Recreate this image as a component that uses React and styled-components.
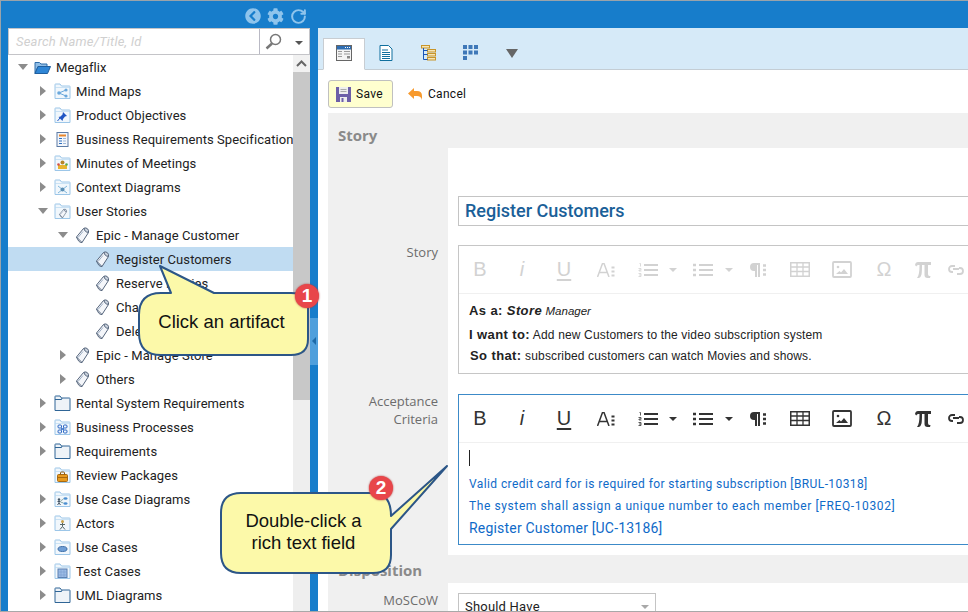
import React from "react"
import styled, { createGlobalStyle } from "styled-components"
import { FaChevronCircleLeft, FaCog } from "react-icons/fa"
import { RotateCw } from "lucide-react"

const GlobalStyle = createGlobalStyle`
  html, body { margin: 0; padding: 0; background: #fff; }
  * { box-sizing: border-box; }
`

const treeRows = [
  { label: "Megaflix", level: 0, arrow: "open", icon: "root" },
  { label: "Mind Maps", level: 1, arrow: "closed", icon: "mind" },
  { label: "Product Objectives", level: 1, arrow: "closed", icon: "pin" },
  { label: "Business Requirements Specification", level: 1, arrow: "closed", icon: "doc" },
  { label: "Minutes of Meetings", level: 1, arrow: "closed", icon: "meeting" },
  { label: "Context Diagrams", level: 1, arrow: "closed", icon: "context" },
  { label: "User Stories", level: 1, arrow: "open", icon: "story" },
  { label: "Epic - Manage Customer", level: 2, arrow: "open", icon: "artifact" },
  { label: "Register Customers", level: 3, icon: "artifact", selected: true },
  { label: "Reserve Movies", level: 3, icon: "artifact" },
  { label: "Change Customer", level: 3, icon: "artifact" },
  { label: "Delete Customer", level: 3, icon: "artifact" },
  { label: "Epic - Manage Store", level: 2, arrow: "closed", icon: "artifact" },
  { label: "Others", level: 2, arrow: "closed", icon: "artifact" },
  { label: "Rental System Requirements", level: 1, arrow: "closed", icon: "plain" },
  { label: "Business Processes", level: 1, arrow: "closed", icon: "process" },
  { label: "Requirements", level: 1, arrow: "closed", icon: "plain" },
  { label: "Review Packages", level: 1, icon: "review" },
  { label: "Use Case Diagrams", level: 1, arrow: "closed", icon: "ucd" },
  { label: "Actors", level: 1, arrow: "closed", icon: "actor" },
  { label: "Use Cases", level: 1, arrow: "closed", icon: "usecase" },
  { label: "Test Cases", level: 1, arrow: "closed", icon: "test" },
  { label: "UML Diagrams", level: 1, arrow: "closed", icon: "plain" },
]

const FolderIcon = ({ dark, children }) => (
  <svg width="17" height="17" viewBox="0 0 17 17">
    <path
      d="M1 15.500V1.500q0-.5 .5-.5h4.500l1.500 2h8q.5 0 .5 .5v12z"
      fill={dark ? "#eef3f8" : "#f1f7fc"}
      stroke={dark ? "#2f6596" : "#9cc6e8"}
      strokeWidth="1"
    />
    <path d="M1 4.500h15" stroke={dark ? "#2f6596" : "#b9d8f0"} fill="none" strokeWidth={dark ? 1 : .7} opacity={dark ? 0 : 1} />
    {dark && <path d="M1 4.500h6.500L8 3" stroke="#2f6596" fill="none" />}
    {children}
  </svg>
)

const ArtifactIcon = ({ small }) => (
  <svg width={small ? 9 : 15} height={small ? 10 : 17} viewBox="0 0 15 17">
    <path d="M1.500 10 8.500 1.500l5 4L7 15.500z" fill="#f4f6fa" stroke="#55657c" strokeLinejoin="round" />
    <path d="M9 1.200q2-.8 3.500 .6t1 3.500q-2 .2-3.200-1.100T9 1.200z" fill="#c9d1dc" stroke="#55657c" />
    <path d="M3 10.500 8 4.500" stroke="#9fb0c6" />
    <path d="M7 15.500q-3 .8-5.500-5.500" fill="none" stroke="#55657c" />
  </svg>
)

const TreeIcon = ({ kind }) => {
  switch (kind) {
    case "root":
      return (
        <svg width="17" height="15" viewBox="0 0 17 15">
          <path d="M1 13.500V2.500h4.500l1.500 1.500h6v2.500H4z" fill="#8fbde6" stroke="#2e6ca8" />
          <path d="M1 13.500 4 6.500h12.500l-3 7z" fill="#2f86d6" stroke="#1f5f9f" />
        </svg>
      )
    case "mind":
      return (
        <FolderIcon>
          <circle cx="5" cy="10" r="1.800" fill="#6aa8dc" />
          <circle cx="12" cy="7" r="1.600" fill="#6aa8dc" />
          <circle cx="12" cy="13" r="1.600" fill="#6aa8dc" />
          <path d="M5 10 12 7M5 10l7 3" stroke="#6aa8dc" />
        </FolderIcon>
      )
    case "pin":
      return (
        <FolderIcon>
          <path d="M9 5l4 4-2 .5-2 2.500-.5 2-4-4 2-.5 2-2z" fill="#1f55c4" />
          <path d="M6 11l-2.500 3" stroke="#1f55c4" />
        </FolderIcon>
      )
    case "doc":
      return (
        <svg width="17" height="17" viewBox="0 0 17 17">
          <rect x="3" y="1.500" width="11" height="14" fill="#f3f6fb" stroke="#5c7ba5" />
          <rect x="5" y="3.500" width="7" height="2" fill="#e8862c" />
          <path d="M5 7.500h3M5 10h3M5 12.500h3" stroke="#2c6fc0" />
          <path d="M9 7.500h3M9 10h3M9 12.500h3" stroke="#9db7d8" />
        </svg>
      )
    case "meeting":
      return (
        <FolderIcon>
          <rect x="4" y="10" width="9" height="4" fill="#e8b52f" />
          <circle cx="8.500" cy="7.500" r="2" fill="#b5862a" />
          <circle cx="4.500" cy="9.500" r="1.300" fill="#d2524a" />
          <circle cx="12.500" cy="9.500" r="1.300" fill="#5aa84f" />
        </FolderIcon>
      )
    case "context":
      return (
        <FolderIcon>
          <path d="M4 7l9 7M13 7l-9 7" stroke="#7fb7dc" />
          <circle cx="8.500" cy="10.500" r="2" fill="#5b8fb5" />
        </FolderIcon>
      )
    case "story":
      return (
        <FolderIcon>
          <g transform="translate(4.500 5.500)"><ArtifactIcon small /></g>
        </FolderIcon>
      )
    case "artifact":
      return <ArtifactIcon />
    case "plain":
      return <FolderIcon dark />
    case "process":
      return (
        <FolderIcon>
          <rect x="4" y="6" width="3.500" height="3" rx="1" fill="none" stroke="#2a66c4" />
          <rect x="9.500" y="6" width="3.500" height="3" rx="1" fill="none" stroke="#2a66c4" />
          <rect x="4" y="11" width="3.500" height="3" rx="1" fill="none" stroke="#2a66c4" />
          <rect x="9.500" y="11" width="3.500" height="3" rx="1" fill="none" stroke="#2a66c4" />
          <path d="M7 9l3 2M10 9l-3 2" stroke="#2a66c4" />
        </FolderIcon>
      )
    case "review":
      return (
        <FolderIcon>
          <rect x="3.500" y="7.500" width="10" height="7" rx="1" fill="#e79a1e" stroke="#a8690f" />
          <path d="M6.500 7.500V6q0-1 1-1h2q1 0 1 1v1.500" fill="none" stroke="#8a5a12" />
          <path d="M3.500 10.500h10" stroke="#a8690f" />
        </FolderIcon>
      )
    case "ucd":
      return (
        <FolderIcon>
          <circle cx="5" cy="8.500" r="1.200" fill="#456" />
          <path d="M5 9.500v2.500l-1.500 2M5 12l1.500 2M3.500 10.500h3" stroke="#456" fill="none" />
          <ellipse cx="11.500" cy="7.500" rx="2" ry="1.200" fill="#4a8ed0" />
          <ellipse cx="11.500" cy="12.500" rx="2" ry="1.200" fill="#4a8ed0" />
          <path d="M6.500 10 9.500 8M6.500 11l3 1" stroke="#8aa" />
        </FolderIcon>
      )
    case "actor":
      return (
        <FolderIcon>
          <circle cx="8.500" cy="6.500" r="1.500" fill="#c9a14a" />
          <path d="M8.500 8v3.500L6 14.500M8.500 11.500l2.500 3M6 9.500h5" stroke="#566" fill="none" />
        </FolderIcon>
      )
    case "usecase":
      return (
        <FolderIcon>
          <ellipse cx="8.500" cy="10" rx="4.500" ry="2.500" fill="#6f9fd6" stroke="#3f6fa8" />
        </FolderIcon>
      )
    case "test":
      return (
        <FolderIcon>
          <rect x="4" y="6" width="9" height="8.500" fill="#9dbde6" stroke="#5a7fb0" />
          <path d="M7 6v8.500M10 6v8.500M4 9h9M4 12h9" stroke="#7b9ed0" strokeWidth=".6" />
        </FolderIcon>
      )
    default:
      return null
  }
}

const TabIcon = ({ kind }) => {
  if (kind === "form") {
    return (
      <svg width="16" height="16" viewBox="0 0 16 16">
        <rect x=".5" y=".5" width="15" height="15" fill="#f4f4f4" stroke="#666" />
        <rect x="1" y="1" width="14" height="3.500" fill="#2f6eb3" />
        <path d="M9 2.500h1M11 2.500h1M13 2.500h1" stroke="#fff" />
        <path d="M2 6.500h4M2 9h4M2 11.500h4M8 6.500h6M8 9h6" stroke="#9a9a9a" />
        <rect x="11" y="11" width="3" height="2.500" fill="#888" />
      </svg>
    )
  }
  if (kind === "page") {
    return (
      <svg width="14" height="16" viewBox="0 0 14 16">
        <path d="M1 .5h8.500L13 4v11.500H1z" fill="#fff" stroke="#0f6f9e" />
        <path d="M3 5h6M3 7.500h8M3 9.500h8M3 11.500h8M3 13.500h8" stroke="#0f6f9e" />
      </svg>
    )
  }
  if (kind === "tree") {
    return (
      <svg width="15" height="16" viewBox="0 0 15 16">
        <rect x=".5" y=".5" width="8" height="2.500" fill="#f7e6b5" stroke="#c8952a" />
        <rect x="6.500" y="4.500" width="8" height="2.500" fill="#f7e6b5" stroke="#c8952a" />
        <rect x="6.500" y="8.500" width="8" height="2.500" fill="#f7e6b5" stroke="#c8952a" />
        <rect x="6.500" y="12.500" width="8" height="2.500" fill="#f7e6b5" stroke="#c8952a" />
        <path d="M2.500 3v11.500h4M2.500 5.500h4M2.500 9.500h4" stroke="#1a56b8" fill="none" />
      </svg>
    )
  }
  return (
    <svg width="15" height="16" viewBox="0 0 15 16">
      <g fill="#3f78b8">
        <rect width="4" height="4" />
        <rect x="5.500" width="4" height="4" />
        <rect x="11" width="4" height="4" />
        <rect y="5.500" width="4" height="4" />
        <rect x="5.500" y="5.500" width="4" height="4" />
        <rect x="11" y="5.500" width="4" height="4" />
        <rect y="11" width="4" height="4" />
      </g>
    </svg>
  )
}

const OrderedIcon = () => (
  <svg width="20" height="14" viewBox="0 0 20 14" stroke="currentColor" fill="none">
    <path d="M6 2h14M6 7h14M6 12h14" strokeWidth="1.800" />
    <path d="M1.500 .5h1v3M.5 5.500h2.500v1.500h-2v1h2.500M.5 10.500h2.500v3h-2.500M1 12h2" strokeWidth=".8" />
  </svg>
)

const BulletIcon = () => (
  <svg width="20" height="14" viewBox="0 0 20 14" stroke="currentColor" fill="none">
    <path d="M6 2h14M6 7h14M6 12h14" strokeWidth="1.800" />
    <path d="M0 2h3M0 7h3M0 12h3" strokeWidth="2.400" strokeDasharray="2.500 0" />
  </svg>
)

const ParagraphIcon = () => (
  <svg width="19" height="16" viewBox="0 0 19 16">
    <path d="M11 1H6a4 4 0 0 0 0 8h1v6h2V3h1v12h2V1z" fill="currentColor" />
    <path d="M15 3.500h3M15 8h3M15 12.500h3" stroke="currentColor" strokeWidth="2.400" />
  </svg>
)

const FontSizeIcon = () => (
  <svg width="18" height="14" viewBox="0 0 18 14">
    <path d="M0.500 14 5.500 .5h1.500L12 14M2.500 9.500h7.500" fill="none" stroke="currentColor" strokeWidth="1.500" />
    <path d="M14.500 4.500h3M14.500 8.500h3M14.500 12.500h3" stroke="currentColor" strokeWidth="2.200" />
  </svg>
)

const TableIcon = () => (
  <svg width="20" height="15" viewBox="0 0 20 15" fill="none" stroke="currentColor">
    <rect x=".75" y=".75" width="18.500" height="13.500" strokeWidth="1.500" />
    <path d="M1 5h18M1 9.500h18M7 1v13M13 1v13" strokeWidth="1.300" />
  </svg>
)

const PictureIcon = () => (
  <svg width="20" height="17" viewBox="0 0 20 17">
    <rect x="1" y="1" width="18" height="15" rx="1" fill="none" stroke="currentColor" strokeWidth="1.800" />
    <circle cx="6" cy="6" r="1.300" fill="currentColor" />
    <path d="M4 13l3.500-3 1.500 1.500 3-3.500 4 5z" fill="currentColor" />
  </svg>
)

const PiIcon = () => (
  <svg width="17" height="18" viewBox="0 0 17 18">
    <path d="M1 4q.5-3 3-3h13v3h-3v9q0 2 1.500 2h1l-.5 2h-2.500q-3 0-3-3V4H8q0 7-.5 9.500T5 17H3q1.500-2 2-5t.5-8H4q-1 0-1.800 1.500z" fill="currentColor" />
  </svg>
)

const ChainIcon = () => (
  <svg width="16" height="10" viewBox="0 0 16 10" fill="none" stroke="currentColor" strokeWidth="1.800">
    <path d="M7 1H4a3 3 0 0 0 0 6h1M9 9h3a3 3 0 0 0 0-6h-1M5 4h6" />
  </svg>
)

const EditorToolbar = ({ muted }) => (
  <ToolRow $muted={muted}>
    <ToolGlyph>B</ToolGlyph>
    <ToolGlyph $italic>i</ToolGlyph>
    <ToolGlyph $underline>U</ToolGlyph>
    <ToolButton><FontSizeIcon /></ToolButton>
    <ToolButton><OrderedIcon /></ToolButton>
    <Caret $gap={4} />
    <ToolButton $width={44}><BulletIcon /></ToolButton>
    <Caret $gap={2} />
    <ToolButton $width={44}><ParagraphIcon /></ToolButton>
    <ToolButton><TableIcon /></ToolButton>
    <ToolButton><PictureIcon /></ToolButton>
    <ToolGlyph $size={20}>Ω</ToolGlyph>
    <ToolButton $width={34}><PiIcon /></ToolButton>
    <ToolButton $width={34}><ChainIcon /></ToolButton>
  </ToolRow>
)

const SpeechBubble = ({ x, y, width, height, body, number, badgeX, badgeY, path, lines }) => (
  <BubbleLayer $x={x} $y={y} $w={width} $h={height}>
    <svg width={width} height={height} viewBox={`0 0 ${width} ${height}`}>
      <path d={path} fill="#fcf9a9" stroke="#2c5687" strokeWidth="2" strokeLinejoin="round" />
    </svg>
    <BubbleText $left={body.left} $top={body.top} $w={body.width} $h={body.height}>
      {lines.map(line => <span key={line}>{line}</span>)}
    </BubbleText>
    <Badge $x={badgeX} $y={badgeY}>{number}</Badge>
  </BubbleLayer>
)

const App = () => (
  <>
    <GlobalStyle />
    <Page>
      <Sidebar>
        <SideHeader>
          <FaChevronCircleLeft size={16} />
          <FaCog size={17} />
          <RotateCw size={17} strokeWidth={2.800} />
        </SideHeader>
        <SearchBox>
          <SearchInput>Search Name/Title, Id</SearchInput>
          <SearchButton>
            <svg width="17" height="17" viewBox="0 0 17 17" fill="none" stroke="#777">
              <circle cx="10.500" cy="6.500" r="5" strokeWidth="1.500" />
              <path d="M7 10.500 1.500 15.500" strokeWidth="2.500" />
            </svg>
            <SmallCaret />
          </SearchButton>
        </SearchBox>
        <TreeArea>
          <Tree>
            {treeRows.map(row => (
              <TreeRow key={row.label} $level={row.level} $selected={row.selected}>
                <ArrowSlot><Arrow $kind={row.arrow} /></ArrowSlot>
                <IconSlot><TreeIcon kind={row.icon} /></IconSlot>
                <RowLabel>{row.label}</RowLabel>
              </TreeRow>
            ))}
          </Tree>
          <ScrollBar>
            <ScrollUp>
              <svg width="11" height="7" viewBox="0 0 11 7" fill="none" stroke="#666" strokeWidth="2"><path d="M1 6l4.500-4.500L10 6" /></svg>
            </ScrollUp>
            <ScrollThumb />
          </ScrollBar>
        </TreeArea>
      </Sidebar>

      <Splitter>
        <SplitHandle />
      </Splitter>

      <Main>
        <TabBar>
          <Tab $active><TabIcon kind="form" /></Tab>
          <Tab><TabIcon kind="page" /></Tab>
          <Tab><TabIcon kind="tree" /></Tab>
          <Tab><TabIcon kind="grid" /></Tab>
          <Tab><TabArrow /></Tab>
        </TabBar>
        <ActionBar>
          <SaveButton>
            <svg width="15" height="15" viewBox="0 0 15 15">
              <rect width="15" height="15" fill="#6d5fa8" />
              <rect x="3" y="0" width="9" height="7" fill="#eee" />
              <path d="M4.500 2.500h6M4.500 4.500h6" stroke="#aaa" />
              <rect x="4" y="10" width="7" height="5" fill="#eee" />
              <rect x="5.500" y="11" width="2" height="4" fill="#6d5fa8" />
            </svg>
            Save
          </SaveButton>
          <CancelButton>
            <svg width="14" height="12" viewBox="0 0 14 12">
              <path d="M6 0v3h3q5 0 5 5v4q-1-4-5-4H6v3L0 5.500z" fill="#f79a2e" />
            </svg>
            Cancel
          </CancelButton>
        </ActionBar>
        <Content>
          <SectionTitle $height={35}>Story</SectionTitle>
          <FieldRow>
            <span />
            <FieldValue $top={48} $bottom={19}>
              <TitleInput>Register Customers</TitleInput>
            </FieldValue>
          </FieldRow>
          <FieldRow>
            <FieldLabel>Story</FieldLabel>
            <FieldValue $bottom={20}>
              <Editor>
                <EditorToolbar muted />
                <StoryBody>
                  <StoryLine $height={24}><b>As a: <i>Store</i></b> <Small>Manager</Small></StoryLine>
                  <StoryLine $height={24}><b>I want to:</b> Add new Customers to the video subscription system</StoryLine>
                  <StoryLine $height={18} $nudge><b>So that:</b> subscribed customers can watch Movies and shows.</StoryLine>
                </StoryBody>
              </Editor>
            </FieldValue>
          </FieldRow>
          <FieldRow>
            <FieldLabel>Acceptance<br />Criteria</FieldLabel>
            <FieldValue $bottom={10}>
              <Editor $active>
                <EditorToolbar />
                <LinkBody>
                  <TextCaret />
                  <RefLink $spacing={0.4}>Valid credit card for is required for starting subscription [BRUL-10318]</RefLink>
                  <RefLink $spacing={0.6}>The system shall assign a unique number to each member [FREQ-10302]</RefLink>
                  <RefLink $spacing={0.2} $large>Register Customer [UC-13186]</RefLink>
                </LinkBody>
              </Editor>
            </FieldValue>
          </FieldRow>
          <SectionTitle $height={28}>Disposition</SectionTitle>
          <FieldRow>
            <FieldLabel $top={8}>MoSCoW</FieldLabel>
            <FieldValue $top={10} $bottom={20}>
              <SelectBox>Should Have<SmallCaret $light /></SelectBox>
            </FieldValue>
          </FieldRow>
        </Content>
      </Main>

      <SpeechBubble
        x={130} y={258} width={190} height={110}
        path="M29 7 83 34H160Q177 34 177 47V80Q177 96 160 96H30Q8 96 8 74V56Q8 34 30 34H40Z"
        body={{ left: 8, top: 33, width: 165, height: 60 }}
        badgeX={176} badgeY={37}
        number="1"
        lines={["Click an artifact"]}
      />
      <SpeechBubble
        x={212} y={456} width={244} height={124}
        path="M234 9 178 59Q178 36 160 36H28Q8 36 8 56V96Q8 116 28 116H160Q178 116 178 98V72Z"
        body={{ left: 8, top: 35, width: 165, height: 80 }}
        badgeX={168} badgeY={31}
        number="2"
        lines={["Double-click a", "rich text field"]}
      />
    </Page>
  </>
)

const Page = styled.div`
  position: relative;
  display: flex;
  width: 968px;
  height: 612px;
  overflow: hidden;
  background: #177dcb;
  border-top: 1px solid #9aa3aa;
  border-left: 1px solid #9aa3aa;
  border-bottom: 1px solid #a8a8a8;
`

const Sidebar = styled.div`
  display: flex;
  flex-direction: column;
  width: 309px;
  padding-left: 7px;
`

const SideHeader = styled.div`
  display: flex;
  align-items: center;
  justify-content: flex-end;
  gap: 6px;
  height: 27px;
  padding: 3px 3px 0 0;
  color: #8fc4ec;
`

const SearchBox = styled.div`
  display: flex;
  height: 27px;
  background: #fff;
  border: 1px solid #c4c4c8;
`

const SearchInput = styled.div`
  flex: 1;
  padding: 6px 7px;
  font: italic 13px/14px Roboto, sans-serif;
  letter-spacing: .2px;
  color: #d0d0d0;
`

const SearchButton = styled.div`
  display: flex;
  align-items: center;
  gap: 13px;
  width: 50px;
  padding-left: 5px;
  border-left: 1px solid #b9b9c4;
`

const SmallCaret = styled.span`
  display: inline-block;
  border-left: 4px solid transparent;
  border-right: 4px solid transparent;
  border-top: 4px solid ${p => (p.$light ? "#a8a8a8" : "#555")};
  margin-top: 2px;
`

const TreeArea = styled.div`
  display: flex;
  flex: 1;
  min-height: 0;
  background: #fff;
`

const Tree = styled.div`
  flex: 1;
  min-width: 0;
  overflow: hidden;
`

const TreeRow = styled.div`
  display: flex;
  align-items: center;
  height: 24px;
  padding-left: ${p => 9 + p.$level * 20}px;
  background: ${p => (p.$selected ? "#c0dcf2" : "transparent")};
  white-space: nowrap;
`

const ArrowSlot = styled.span`
  flex: none;
  display: flex;
  align-items: center;
  justify-content: center;
  width: 11px;
  margin-right: 5px;
`

const Arrow = styled.span`
  width: 0;
  height: 0;
  border-style: solid;
  border-color: transparent;
  border-width: ${p => (p.$kind === "open" ? "6px 5px 0 5px" : "5px 0 5px 6px")};
  ${p => p.$kind === "open" && "border-top-color: #8c8c8c;"}
  ${p => p.$kind === "closed" && "border-left-color: #8c8c8c;"}
  ${p => !p.$kind && "border-width: 0;"}
`

const IconSlot = styled.span`
  flex: none;
  display: flex;
  justify-content: center;
  width: 18px;
  margin-right: 4px;
`

const RowLabel = styled.span`
  padding: 1px 0 0 1px;
  font: 13px/23px Roboto, sans-serif;
  letter-spacing: .08px;
  color: #222;
`

const ScrollBar = styled.div`
  display: flex;
  flex-direction: column;
  width: 17px;
  background: #eeeeee;
`

const ScrollUp = styled.div`
  display: flex;
  align-items: center;
  justify-content: center;
  height: 17px;
  background: #f1f1f1;
`

const ScrollThumb = styled.div`
  height: 328px;
  background: #c8c8c8;
`

const Splitter = styled.div`
  width: 8px;
  padding-top: 317px;
`

const SplitHandle = styled.div`
  height: 47px;
  background: #4f9fdc;
  position: relative;
  &::after {
    content: "";
    position: absolute;
    top: 19px;
    left: 2px;
    border-top: 4px solid transparent;
    border-bottom: 4px solid transparent;
    border-right: 4px solid #1d6aa8;
  }
`

const Main = styled.div`
  display: flex;
  flex-direction: column;
  flex: 1;
  min-width: 0;
  margin-top: 27px;
  background: #fff;
`

const TabBar = styled.div`
  display: flex;
  align-items: flex-end;
  flex: none;
  height: 42px;
  padding-left: 5px;
  background: #d6eaf8;
  border-bottom: 1px solid #c4cdd4;
`

const Tab = styled.div`
  display: flex;
  align-items: center;
  justify-content: center;
  width: 42px;
  height: 32px;
  margin-bottom: -1px;
  padding-bottom: 2px;
  ${p => p.$active && `
    background: #fff;
    border: 1px solid #c8cdd2;
    border-bottom: 1px solid #fff;
  `}
`

const TabArrow = styled.span`
  border-left: 6px solid transparent;
  border-right: 6px solid transparent;
  border-top: 9px solid #666;
`

const ActionBar = styled.div`
  display: flex;
  align-items: center;
  flex: none;
  gap: 15px;
  height: 43px;
  padding: 5px 0 0 10px;
`

const SaveButton = styled.div`
  display: flex;
  align-items: center;
  gap: 5px;
  height: 28px;
  width: 65px;
  padding-left: 7px;
  background: #ffffcf;
  border: 1px solid #c0c0c0;
  border-radius: 3px;
  font: 12px Roboto, sans-serif;
  letter-spacing: .3px;
  color: #111;
`

const CancelButton = styled.div`
  display: flex;
  align-items: center;
  gap: 6px;
  font: 12px Roboto, sans-serif;
  letter-spacing: .3px;
  color: #111;
`

const Content = styled.div`
  flex: 1;
  min-height: 0;
  margin-left: 10px;
  background: #f0f0f0;
`

const SectionTitle = styled.div`
  display: flex;
  align-items: ${p => (p.$height > 30 ? "flex-start" : "center")};
  height: ${p => p.$height}px;
  padding: ${p => (p.$height > 30 ? "13px" : "2px")} 10px 0;
  font: 700 15px/18px "Open Sans", sans-serif;
  color: #8a8a8a;
`

const FieldRow = styled.div`
  display: grid;
  grid-template-columns: 120px 1fr;
`

const FieldLabel = styled.div`
  padding-right: 10px;
  margin-top: ${p => (p.$top === undefined ? -2 : p.$top)}px;
  font: 13px/18px "Open Sans", sans-serif;
  color: #6c6c6c;
  text-align: right;
`

const FieldValue = styled.div`
  min-width: 0;
  background: #fff;
  padding: ${p => p.$top || 0}px 0 ${p => p.$bottom || 0}px 10px;
`

const TitleInput = styled.div`
  height: 30px;
  width: 530px;
  padding-left: 6px;
  border: 1px solid #c4c4c4;
  font: 500 18px/28px Roboto, sans-serif;
  color: #1a6098;
`

const Editor = styled.div`
  width: 530px;
  border: 1px solid ${p => (p.$active ? "#3c8ac8" : "#c6c6c6")};
`

const ToolRow = styled.div`
  display: flex;
  align-items: center;
  height: 48px;
  color: ${p => (p.$muted ? "#d2d2d2" : "#333")};
  border-bottom: 1px solid #f0f0f0;
  white-space: nowrap;
  overflow: hidden;
`

const ToolButton = styled.span`
  flex: none;
  display: flex;
  align-items: center;
  justify-content: center;
  width: ${p => p.$width || 42}px;
`

const ToolGlyph = styled(ToolButton)`
  font-family: "Liberation Sans", Arial, sans-serif;
  font-size: ${p => p.$size || 20}px;
  font-style: ${p => (p.$italic ? "italic" : "normal")};
  text-decoration: ${p => (p.$underline ? "underline" : "none")};
  text-underline-offset: 3px;
`

const Caret = styled.span`
  flex: none;
  width: 0;
  height: 0;
  margin-right: ${p => p.$gap || 0}px;
  border-left: 4px solid transparent;
  border-right: 4px solid transparent;
  border-top: 4px solid currentColor;
`

const StoryBody = styled.div`
  height: 79px;
  padding: 5px 10px 0;
`

const StoryLine = styled.div`
  font: 12px/${p => p.$height}px "Liberation Sans", Arial, sans-serif;
  letter-spacing: .15px;
  color: #222;
  b { font-size: 13px; letter-spacing: .4px; }
  ${p => p.$nudge && "padding-left: 1px;"}
`

const Small = styled.i`
  font-size: 11.500px;
  letter-spacing: 0;
`

const LinkBody = styled.div`
  height: 101px;
  padding: 7px 10px 0;
`

const TextCaret = styled.div`
  width: 1px;
  height: 16px;
  margin-bottom: 7px;
  background: #222;
`

const RefLink = styled.div`
  font: ${p => (p.$large ? 14 : 12)}px/22px Roboto, sans-serif;
  letter-spacing: ${p => p.$spacing}px;
  color: #0f6ac8;
`

const SelectBox = styled.div`
  display: flex;
  align-items: center;
  justify-content: space-between;
  width: 198px;
  height: 26px;
  padding: 0 6px;
  border: 1px solid #c4c4c4;
  font: 13px Roboto, sans-serif;
  letter-spacing: .2px;
  color: #222;
`

const BubbleLayer = styled.div`
  position: absolute;
  left: ${p => p.$x}px;
  top: ${p => p.$y}px;
  width: ${p => p.$w}px;
  height: ${p => p.$h}px;
  svg { display: block; }
`

const BubbleText = styled.div`
  position: absolute;
  left: ${p => p.$left}px;
  top: ${p => p.$top}px;
  width: ${p => p.$w}px;
  height: ${p => p.$h}px;
  display: flex;
  flex-direction: column;
  align-items: center;
  justify-content: center;
  font: 18.500px/22px "Liberation Sans", Arial, sans-serif;
  color: #111;
`

const Badge = styled.div`
  position: absolute;
  left: ${p => p.$x - 12}px;
  top: ${p => p.$y - 12}px;
  width: 24px;
  height: 24px;
  border-radius: 50%;
  background: #e8464a;
  color: #fff;
  text-align: center;
  font: 700 19px/24px "Liberation Sans", Arial, sans-serif;
  box-shadow: 0 0 2px #a33;
`

export default App
